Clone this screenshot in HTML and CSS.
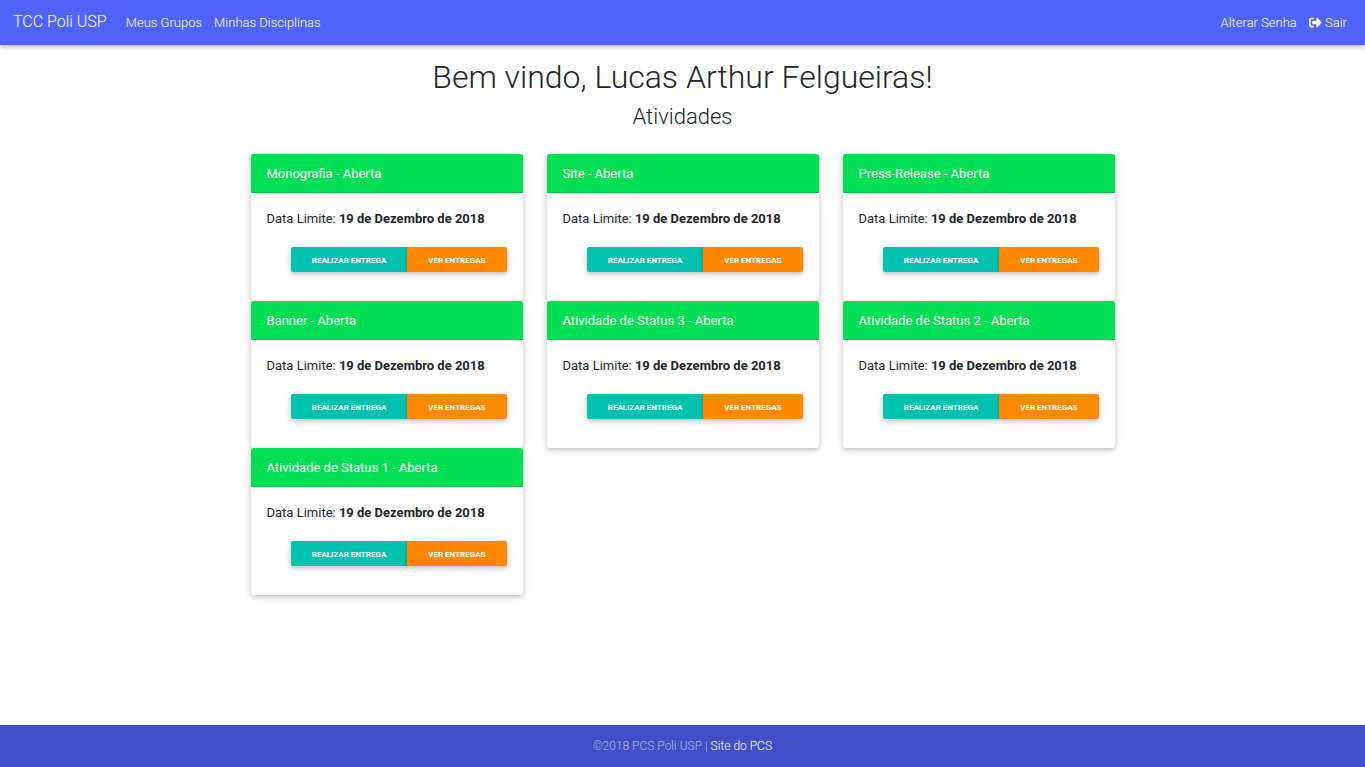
FILE: index.html
```html
<!DOCTYPE html>
<html lang="pt-BR">
<head>
<meta charset="utf-8">
<meta name="viewport" content="width=device-width, initial-scale=1">
<title>TCC Poli USP</title>
<link rel="stylesheet" href="styles.css">
</head>
<body>
<header>
<nav class="navbar">
<a class="brand" href="#">TCC Poli USP</a>
<a class="nav-link" href="#">Meus Grupos</a>
<a class="nav-link" href="#">Minhas Disciplinas</a>
<a class="nav-link push" href="#">Alterar Senha</a>
<a class="nav-link" href="#"><svg class="icon" viewBox="0 0 512 512" aria-hidden="true"><path d="M497 273L329 441c-15 15-41 4.500-41-17v-96H152c-13.300 0-24-10.700-24-24v-96c0-13.300 10.700-24 24-24h136V88c0-21.400 25.900-32 41-17l168 168c9.300 9.400 9.300 24.600 0 34zM192 436v-40c0-6.600-5.400-12-12-12H96c-17.700 0-32-14.300-32-32V160c0-17.700 14.300-32 32-32h84c6.600 0 12-5.400 12-12V76c0-6.600-5.400-12-12-12H96c-53 0-96 43-96 96v192c0 53 43 96 96 96h84c6.600 0 12-5.400 12-12z"/></svg> Sair</a>
</nav>
</header>
<main class="container">
<h1>Bem vindo, Lucas Arthur Felgueiras!</h1>
<h2>Atividades</h2>
<div class="grid">
<article class="card"><h3 class="card-header">Monografia - Aberta</h3><div class="card-body"><p>Data Limite: <strong>19 de Dezembro de 2018</strong></p><div class="group"><button class="btn teal" type="button">Realizar entrega</button><button class="btn orange" type="button">Ver entregas</button></div></div></article>
<article class="card"><h3 class="card-header">Site - Aberta</h3><div class="card-body"><p>Data Limite: <strong>19 de Dezembro de 2018</strong></p><div class="group"><button class="btn teal" type="button">Realizar entrega</button><button class="btn orange" type="button">Ver entregas</button></div></div></article>
<article class="card"><h3 class="card-header">Press-Release - Aberta</h3><div class="card-body"><p>Data Limite: <strong>19 de Dezembro de 2018</strong></p><div class="group"><button class="btn teal" type="button">Realizar entrega</button><button class="btn orange" type="button">Ver entregas</button></div></div></article>
<article class="card"><h3 class="card-header">Banner - Aberta</h3><div class="card-body"><p>Data Limite: <strong>19 de Dezembro de 2018</strong></p><div class="group"><button class="btn teal" type="button">Realizar entrega</button><button class="btn orange" type="button">Ver entregas</button></div></div></article>
<article class="card"><h3 class="card-header">Atividade de Status 3 - Aberta</h3><div class="card-body"><p>Data Limite: <strong>19 de Dezembro de 2018</strong></p><div class="group"><button class="btn teal" type="button">Realizar entrega</button><button class="btn orange" type="button">Ver entregas</button></div></div></article>
<article class="card"><h3 class="card-header">Atividade de Status 2 - Aberta</h3><div class="card-body"><p>Data Limite: <strong>19 de Dezembro de 2018</strong></p><div class="group"><button class="btn teal" type="button">Realizar entrega</button><button class="btn orange" type="button">Ver entregas</button></div></div></article>
<article class="card"><h3 class="card-header">Atividade de Status 1 - Aberta</h3><div class="card-body"><p>Data Limite: <strong>19 de Dezembro de 2018</strong></p><div class="group"><button class="btn teal" type="button">Realizar entrega</button><button class="btn orange" type="button">Ver entregas</button></div></div></article>
</div>
</main>
<footer class="footer">©2018 PCS Poli USP | <a href="#">Site do PCS</a></footer>
</body>
</html>
```
FILE: styles.css
```css
* { box-sizing: border-box; }
body {
  margin: 0;
  min-height: 100vh;
  display: flex;
  flex-direction: column;
  font-family: Roboto, sans-serif;
  font-size: 13px;
  line-height: 20px;
  color: #212529;
  background: #fff;
}
a { color: inherit; text-decoration: none; }
.navbar {
  display: flex;
  align-items: center;
  gap: 12px;
  padding: 6px 18px 7px 13px;
  background: #4f63f7;
  color: #fff;
  font-weight: 300;
  box-shadow: 0 2px 4px rgba(0, 0, 0, .16), 0 2px 8px rgba(0, 0, 0, .12);
}
.brand { font-size: 16px; line-height: 32px; padding-right: 7px; }
.nav-link { padding-top: 2px; }
.push { margin-left: auto; }
.icon { width: 13px; height: 13px; fill: currentColor; vertical-align: -2px; }
.container { width: 100%; max-width: 912px; margin: 0 auto; padding: 12px 24px; flex: 1; }
h1, h2 { margin: 0; font-weight: 300; text-align: center; }
h1 { font-size: 32px; line-height: 40px; }
h2 { font-size: 22px; line-height: 28px; padding: 6px 0 23px; }
.grid {
  display: grid;
  grid-template-columns: repeat(auto-fill, minmax(256px, 1fr));
  column-gap: 24px;
}
.card {
  border-radius: 3px;
  background: #fff;
  box-shadow: 0 2px 4px rgba(0, 0, 0, .16), 0 2px 8px rgba(0, 0, 0, .12);
}
.card-header {
  margin: 0;
  padding: 10px 16px 8px;
  font-size: 13px;
  font-weight: 400;
  color: #fff;
  background: #00df54;
  border-bottom: 1px solid rgba(0, 0, 0, .125);
  border-radius: 3px 3px 0 0;
}
.card-body { padding: 16px 16px 29px; }
.card-body p { margin: 0 0 18px; }
.group { display: flex; justify-content: flex-end; }
.btn {
  border: 0;
  margin: 0;
  height: 25px;
  padding: 2px 21px 0;
  font-family: inherit;
  font-size: 8px;
  font-weight: 700;
  text-transform: uppercase;
  color: #fff;
  box-shadow: 0 2px 4px rgba(0, 0, 0, .16), 0 2px 8px rgba(0, 0, 0, .12);
}
.teal { background: #00c2ae; border-radius: 2px 0 0 2px; }
.orange { background: #ff8800; border-radius: 0 2px 2px 0; }
.footer {
  padding: 11px 16px;
  text-align: center;
  font-size: 12px;
  font-weight: 300;
  color: rgba(255, 255, 255, .6);
  background: #404fc6;
}
.footer a { color: #fff; }
```
